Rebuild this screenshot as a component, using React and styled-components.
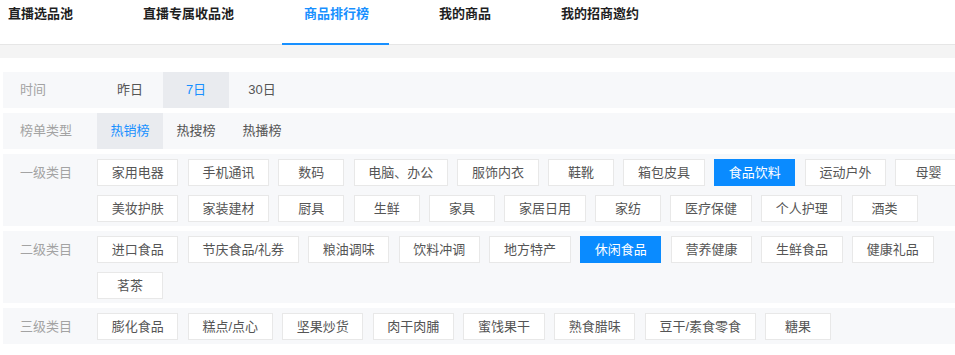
import React, { useState } from 'react';
import styled, { createGlobalStyle } from 'styled-components';

const GlobalStyle = createGlobalStyle`
  html, body {
    margin: 0;
    padding: 0;
    background: #fff;
    overflow: hidden;
  }
  body {
    font-family: "Liberation Sans", "Noto Sans CJK SC", sans-serif;
    font-size: 13px;
    color: #333;
  }
`;

const tabs = ['直播选品池', '直播专属收品池', '商品排行榜', '我的商品', '我的招商邀约'];
const times = ['昨日', '7日', '30日'];
const rankTypes = ['热销榜', '热搜榜', '热播榜'];
const level1 = [
  '家用电器', '手机通讯', '数码', '电脑、办公', '服饰内衣', '鞋靴', '箱包皮具', '食品饮料',
  '运动户外', '母婴', '美妆护肤', '家装建材', '厨具', '生鲜', '家具', '家居日用', '家纺',
  '医疗保健', '个人护理', '酒类',
];
const level2 = [
  '进口食品', '节庆食品/礼券', '粮油调味', '饮料冲调', '地方特产', '休闲食品', '营养健康',
  '生鲜食品', '健康礼品', '茗茶',
];
const level3 = [
  '膨化食品', '糕点/点心', '坚果炒货', '肉干肉脯', '蜜饯果干', '熟食腊味', '豆干/素食零食', '糖果',
];

const Page = styled.div`
  width: 1000px;
`;

const TabBar = styled.div`
  display: flex;
  gap: 70px;
  height: 45px;
  padding-left: 8px;
  border-bottom: 1px solid #e6e6e6;
  box-sizing: border-box;
`;

const Tab = styled.div`
  position: relative;
  padding-top: 5px;
  line-height: 18px;
  font-size: 13px;
  font-weight: bold;
  color: ${(p) => (p.$active ? '#1890ff' : '#1f1f1f')};
  cursor: pointer;

  &::after {
    content: '';
    display: ${(p) => (p.$active ? 'block' : 'none')};
    position: absolute;
    left: -22px;
    right: -20px;
    bottom: -1px;
    height: 2px;
    background: #1890ff;
  }
`;

const Strip = styled.div`
  height: 13px;
  background: #f4f4f4;
`;

const Filters = styled.div`
  display: flex;
  flex-direction: column;
  gap: 5px;
  padding: 14px 3px 0;
`;

const Row = styled.div`
  display: flex;
  align-items: ${(p) => (p.$tags ? 'flex-start' : 'stretch')};
  background: #f7f8fa;
  padding: ${(p) => (p.$tags ? '5px 0 4px' : '0')};
  min-height: ${(p) => (p.$tags ? 'auto' : '36px')};
`;

const Label = styled.div`
  flex: 0 0 94px;
  box-sizing: border-box;
  padding-left: 17px;
  color: #a3a3a3;
  font-size: 13px;
  line-height: ${(p) => (p.$tags ? '27px' : '36px')};
`;

const Options = styled.div`
  display: flex;
`;

const Option = styled.div`
  width: 66px;
  text-align: center;
  line-height: 36px;
  font-size: 13px;
  color: ${(p) => (p.$active ? '#1890ff' : '#555')};
  background: ${(p) => (p.$active ? '#e9ebef' : 'transparent')};
  cursor: pointer;
`;

const Tags = styled.div`
  flex: 1;
  display: flex;
  flex-wrap: wrap;
  gap: 9px 9.3px;
`;

const Tag = styled.div`
  box-sizing: border-box;
  min-width: 66px;
  height: 27px;
  padding: 0 13.7px;
  line-height: 25px;
  text-align: center;
  font-size: 13px;
  white-space: nowrap;
  border: 1px solid ${(p) => (p.$active ? '#0a8bff' : '#e8e8e8')};
  background: ${(p) => (p.$active ? '#0a8bff' : '#fff')};
  color: ${(p) => (p.$active ? '#fff' : '#555')};
  cursor: pointer;
`;

const TagRow = ({ label, items, active, onPick }) => (
  <Row $tags>
    <Label $tags>{label}</Label>
    <Tags>
      {items.map((t) => (
        <Tag key={t} $active={t === active} onClick={() => onPick(t)}>{t}</Tag>
      ))}
    </Tags>
  </Row>
);

const App = () => {
  const [tab, setTab] = useState('商品排行榜');
  const [time, setTime] = useState('7日');
  const [rank, setRank] = useState('热销榜');
  const [c1, setC1] = useState('食品饮料');
  const [c2, setC2] = useState('休闲食品');
  const [c3, setC3] = useState('');

  return (
    <Page>
      <GlobalStyle />
      <TabBar>
        {tabs.map((t) => (
          <Tab key={t} $active={t === tab} onClick={() => setTab(t)}>{t}</Tab>
        ))}
      </TabBar>
      <Strip />
      <Filters>
        <Row>
          <Label>时间</Label>
          <Options>
            {times.map((t) => (
              <Option key={t} $active={t === time} onClick={() => setTime(t)}>{t}</Option>
            ))}
          </Options>
        </Row>
        <Row>
          <Label>榜单类型</Label>
          <Options>
            {rankTypes.map((t) => (
              <Option key={t} $active={t === rank} onClick={() => setRank(t)}>{t}</Option>
            ))}
          </Options>
        </Row>
        <TagRow label="一级类目" items={level1} active={c1} onPick={setC1} />
        <TagRow label="二级类目" items={level2} active={c2} onPick={setC2} />
        <TagRow label="三级类目" items={level3} active={c3} onPick={setC3} />
      </Filters>
    </Page>
  );
};

export default App;
